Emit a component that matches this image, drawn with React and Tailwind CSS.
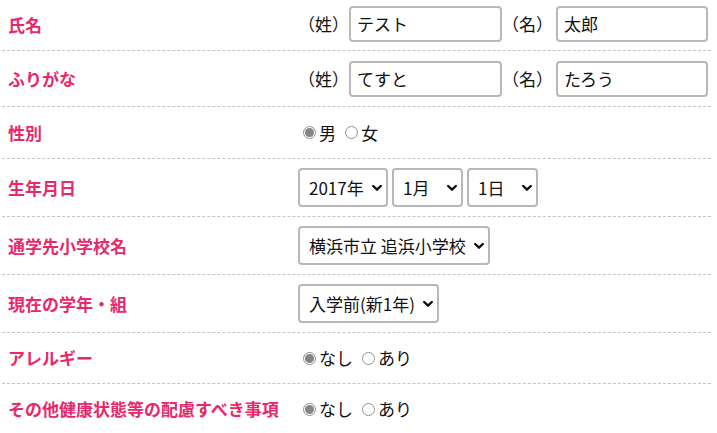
import React from "react";

const FONT = { fontFamily: '"Noto Sans CJK JP", "Noto Sans", sans-serif' };

function Chevron() {
  return (
    <svg
      className="pointer-events-none absolute right-[6px] top-1/2 -translate-y-1/2"
      width="10"
      height="7"
      viewBox="0 0 10 7"
    >
      <path d="M1.2 1.5 L5 5.2 L8.8 1.5" fill="none" stroke="#111" strokeWidth="2.4" strokeLinecap="round" strokeLinejoin="round" />
    </svg>
  );
}

function Select({ width, value }) {
  return (
    <div className="relative" style={{ width }}>
      <select
        defaultValue={value}
        className="w-full h-[39px] appearance-none rounded-[4px] border-2 border-[#b8b8b8] bg-white pl-[9px] pr-[20px] text-[17px] text-[#111] outline-none"
      >
        <option value={value}>{value}</option>
      </select>
      <Chevron />
    </div>
  );
}

function Radio({ checked, label }) {
  return (
    <label className="flex items-center">
      <span className="ml-[5px] mr-[3px] flex h-[13px] w-[13px] items-center justify-center rounded-full border border-[#8f8f8f] bg-white">
        {checked && <span className="h-[9px] w-[9px] rounded-full bg-[#858585]" />}
      </span>
      <span>{label}</span>
    </label>
  );
}

function Row({ label, h, children }) {
  return (
    <div className={`flex items-center border-b border-dashed border-[#c4c4c4] ${h}`}>
      <div className="w-[296px] pl-[6px] text-[17px] font-bold text-[#e8286a]">{label}</div>
      <div className="flex items-center text-[17px] text-[#111]">{children}</div>
    </div>
  );
}

function Text({ value, w }) {
  return (
    <input
      defaultValue={value}
      className={`h-[36px] ${w} rounded-[4px] border-2 border-[#b8b8b8] bg-white px-[6px] text-[17px] text-[#111] outline-none`}
    />
  );
}

function NameInputs({ a, b, pt }) {
  return (
    <div className={`flex items-center ${pt}`}>
      <span>（姓）</span>
      <span><Text value={a} w="w-[153px]" /></span>
      <span>（名）</span>
      <span className="ml-[3px]"><Text value={b} w="w-[152px]" /></span>
    </div>
  );
}

export default function App() {
  return (
    <div className="h-[433px] w-[717px] overflow-hidden bg-white" style={FONT}>
      <div className="ml-[2px] w-[709px]">
        <Row label="氏名" h="h-[51px]">
          <NameInputs a="テスト" b="太郎" pt="pb-[3px]" />
        </Row>
        <Row label="ふりがな" h="h-[56px]">
          <NameInputs a="てすと" b="たろう" pt="" />
        </Row>
        <Row label="性別" h="h-[52px]">
          <div className="flex items-center gap-[4px]">
            <Radio checked label="男" />
            <Radio label="女" />
          </div>
        </Row>
        <Row label="生年月日" h="h-[58px]">
          <div className="flex items-center gap-[4px]">
            <Select width="90px" value="2017年" />
            <Select width="71px" value="1月" />
            <Select width="71px" value="1日" />
          </div>
        </Row>
        <Row label="通学先小学校名" h="h-[58px]">
          <Select width="192px" value="横浜市立 追浜小学校" />
        </Row>
        <Row label="現在の学年・組" h="h-[58px]">
          <Select width="141px" value="入学前(新1年)" />
        </Row>
        <Row label="アレルギー" h="h-[51px]">
          <div className="flex items-center gap-[4px]">
            <Radio checked label="なし" />
            <Radio label="あり" />
          </div>
        </Row>
        <div className="flex h-[50px] items-center">
          <div className="w-[296px] pl-[6px] text-[17px] font-bold text-[#e8286a]">その他健康状態等の配慮すべき事項</div>
          <div className="flex items-center gap-[4px] text-[17px] text-[#111]">
            <Radio checked label="なし" />
            <Radio label="あり" />
          </div>
        </div>
      </div>
    </div>
  );
}
